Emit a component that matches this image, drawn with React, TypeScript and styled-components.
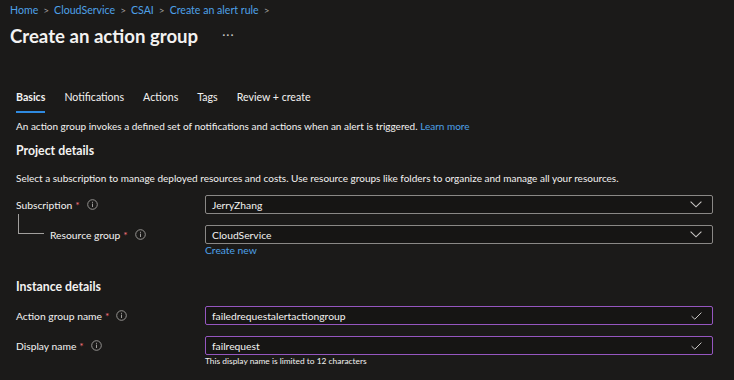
import styled, { createGlobalStyle } from "styled-components";

const GlobalStyle = createGlobalStyle`
  body {
    margin: 0;
    background: #1b1a19;
    color: #f3f2f1;
    font-family: Lato, "Open Sans", sans-serif;
  }
`;

const Page = styled.div`
  width: 734px;
  height: 380px;
  overflow: hidden;
  background: #1b1a19;
`;

const Header = styled.div`
  padding: 2px 10px 0;
`;

const Breadcrumb = styled.nav`
  display: flex;
  align-items: center;
  gap: 5px;
  height: 16px;
  font-size: 10.6px;
  color: #4ea1e8;
`;

const Chevron = styled.span`
  color: #a19f9d;
  font-size: 10px;
`;

const TitleRow = styled.div`
  display: flex;
  align-items: center;
  gap: 24px;
  margin-top: 4px;
  height: 28px;
`;

const Title = styled.h1`
  margin: 0;
  font-size: 18.6px;
  font-weight: 700;
`;

const More = styled.span`
  color: #c8c6c4;
  font-size: 12px;
  letter-spacing: 1px;
  margin-top: -4px;
`;

const Tabs = styled.div`
  display: flex;
  gap: 19px;
  margin: 39px 0 0 16px;
`;

const Tab = styled.div<{ $active?: boolean }>`
  font-size: 10.6px;
  font-weight: ${(p) => (p.$active ? 700 : 400)};
  padding-bottom: 6px;
  height: 16px;
  line-height: 16px;
  border-bottom: 2px solid ${(p) => (p.$active ? "#2f8ae0" : "transparent")};
`;

const Content = styled.div`
  padding: 0 21px 0 16px;
`;

const Text = styled.p<{ $top: number }>`
  margin: ${(p) => p.$top}px 0 0;
  font-size: 10px;
  line-height: 16px;
`;

const Link = styled.a`
  color: #4ea1e8;
  text-decoration: none;
  cursor: pointer;
`;

const SectionTitle = styled.h2<{ $top: number }>`
  margin: ${(p) => p.$top}px 0 0;
  font-size: 12.3px;
  font-weight: 700;
  line-height: 18px;
`;

const Row = styled.div<{ $top: number }>`
  display: grid;
  grid-template-columns: 189px 1fr;
  margin-top: ${(p) => p.$top}px;
`;

const LabelCell = styled.div<{ $indent?: boolean }>`
  position: relative;
  display: flex;
  align-items: center;
  height: 19px;
  padding-left: ${(p) => (p.$indent ? 34 : 0)}px;
  font-size: 10.3px;
`;

const Connector = styled.div`
  position: absolute;
  left: 2px;
  top: -11px;
  width: 25px;
  height: 19px;
  border-left: 1px solid #a19f9d;
  border-bottom: 1px solid #a19f9d;
`;

const Star = styled.span`
  color: #f1707b;
  margin-left: 3px;
`;

const Info = styled.span`
  display: inline-flex;
  margin-left: 7px;
`;

const Field = styled.div`
  display: flex;
  flex-direction: column;
`;

const Box = styled.div<{ $valid?: boolean }>`
  display: flex;
  align-items: center;
  justify-content: space-between;
  height: 19px;
  box-sizing: border-box;
  padding: 0 10px 0 6px;
  border: 1px solid ${(p) => (p.$valid ? "#9556c0" : "#8a8886")};
  border-radius: 2px;
  background: #161514;
  font-size: 10.3px;
`;

const SubLink = styled(Link)`
  font-size: 10.3px;
  line-height: 14px;
  margin-top: -1px;
`;

const Hint = styled.div`
  font-size: 8.4px;
  line-height: 13px;
  margin-top: 0;
  color: #f3f2f1;
`;

function InfoIcon() {
  return (
    <svg width="11" height="11" viewBox="0 0 11 11">
      <circle cx="5.5" cy="5.5" r="4.8" fill="none" stroke="#a19f9d" strokeWidth="0.9" />
      <rect x="5" y="4.6" width="1" height="3.4" fill="#a19f9d" />
      <rect x="5" y="2.8" width="1" height="1" fill="#a19f9d" />
    </svg>
  );
}

function ChevronDown() {
  return (
    <svg width="12" height="7" viewBox="0 0 12 7">
      <path d="M0.6 0.6 L6 5.8 L11.4 0.6" fill="none" stroke="#c8c6c4" strokeWidth="1.1" />
    </svg>
  );
}

function Check() {
  return (
    <svg width="11" height="8" viewBox="0 0 11 8">
      <path d="M0.6 4.2 L3.8 7.2 L10.4 0.6" fill="none" stroke="#c8c6c4" strokeWidth="1" />
    </svg>
  );
}

function Label({ text, indent }: { text: string; indent?: boolean }) {
  return (
    <LabelCell $indent={indent}>
      {indent && <Connector />}
      {text}
      <Star>*</Star>
      <Info>
        <InfoIcon />
      </Info>
    </LabelCell>
  );
}

export default function App() {
  return (
    <Page>
      <GlobalStyle />
      <Header>
        <Breadcrumb>
          <span>Home</span>
          <Chevron>&gt;</Chevron>
          <span>CloudService</span>
          <Chevron>&gt;</Chevron>
          <span>CSAI</span>
          <Chevron>&gt;</Chevron>
          <span>Create an alert rule</span>
          <Chevron>&gt;</Chevron>
        </Breadcrumb>
        <TitleRow>
          <Title>Create an action group</Title>
          <More>···</More>
        </TitleRow>
      </Header>

      <Tabs>
        <Tab $active>Basics</Tab>
        <Tab>Notifications</Tab>
        <Tab>Actions</Tab>
        <Tab>Tags</Tab>
        <Tab>Review + create</Tab>
      </Tabs>

      <Content>
        <Text $top={5}>
          An action group invokes a defined set of notifications and actions when an alert is triggered.{" "}
          <Link>Learn more</Link>
        </Text>

        <SectionTitle $top={8}>Project details</SectionTitle>
        <Text $top={10}>
          Select a subscription to manage deployed resources and costs. Use resource groups like folders to organize
          and manage all your resources.
        </Text>

        <Row $top={9}>
          <Label text="Subscription" />
          <Field>
            <Box>
              JerryZhang
              <ChevronDown />
            </Box>
          </Field>
        </Row>

        <Row $top={11}>
          <Label text="Resource group" indent />
          <Field>
            <Box>
              CloudService
              <ChevronDown />
            </Box>
            <SubLink>Create new</SubLink>
          </Field>
        </Row>

        <SectionTitle $top={21}>Instance details</SectionTitle>

        <Row $top={10}>
          <Label text="Action group name" />
          <Field>
            <Box $valid>
              failedrequestalertactiongroup
              <Check />
            </Box>
          </Field>
        </Row>

        <Row $top={11}>
          <Label text="Display name" />
          <Field>
            <Box $valid>
              failrequest
              <Check />
            </Box>
            <Hint>This display name is limited to 12 characters</Hint>
          </Field>
        </Row>
      </Content>
    </Page>
  );
}
